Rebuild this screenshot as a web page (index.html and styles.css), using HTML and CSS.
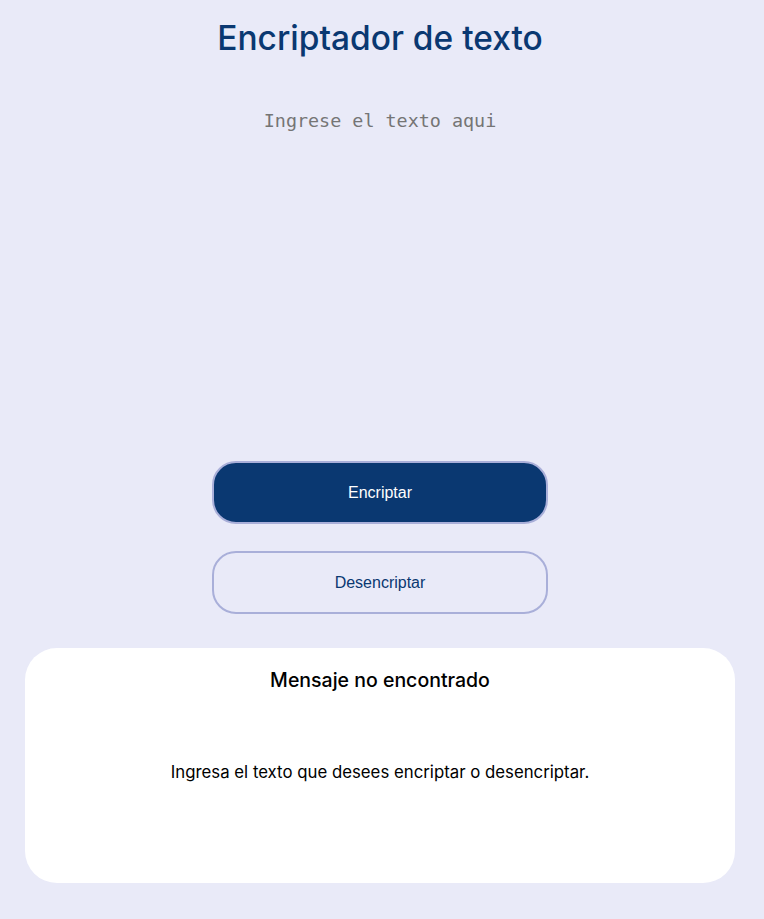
FILE: index.html
```html
<!DOCTYPE html>
<html lang="es">
<head>
<meta charset="utf-8">
<title>Encriptador de texto</title>
<link rel="stylesheet" href="styles.css">
</head>
<body>
<main class="page">
  <h1 class="title">Encriptador de texto</h1>
  <textarea class="input" placeholder="Ingrese el texto aqui"></textarea>
  <div class="actions">
    <button class="btn btn-primary">Encriptar</button>
    <button class="btn btn-secondary">Desencriptar</button>
  </div>
  <section class="card">
    <h2 class="card-title">Mensaje no encontrado</h2>
    <p class="card-text">Ingresa el texto que desees encriptar o desencriptar.</p>
  </section>
</main>
</body>
</html>
```
FILE: styles.css
```css
html, body {
  margin: 0;
  padding: 0;
  background: #e9eaf8;
}
.page {
  width: 760px;
  display: flex;
  flex-direction: column;
  align-items: center;
  font-family: Inter, "Liberation Sans", sans-serif;
}
.title {
  margin: 16px 0 0;
  font-size: 33.5px;
  font-weight: 500;
  line-height: 44px;
  color: #0a3871;
}
.input {
  margin-top: 48px;
  width: 700px;
  height: 331px;
  border: none;
  outline: none;
  resize: none;
  background: transparent;
  text-align: center;
  font-family: "DejaVu Sans Mono", monospace;
  font-size: 18.4px;
  color: #333;
}
.input::placeholder {
  color: #757575;
}
.actions {
  margin-top: 18px;
  display: flex;
  flex-direction: column;
  gap: 27px;
}
.btn {
  width: 336px;
  height: 63px;
  border-radius: 24px;
  border: 2px solid #a9afd9;
  font-family: "Liberation Sans", Arial, sans-serif;
  font-size: 16px;
}
.btn-primary {
  background: #0a3871;
  color: #ffffff;
}
.btn-secondary {
  background: transparent;
  color: #0a3871;
}
.card {
  margin-top: 34px;
  width: 710px;
  height: 235px;
  background: #ffffff;
  border-radius: 32px;
  display: flex;
  flex-direction: column;
  align-items: center;
}
.card-title {
  margin: 20px 0 0;
  font-size: 19.5px;
  font-weight: 500;
  color: #000;
}
.card-text {
  margin: 70px 0 0;
  font-size: 16.8px;
  color: #000;
}
```
